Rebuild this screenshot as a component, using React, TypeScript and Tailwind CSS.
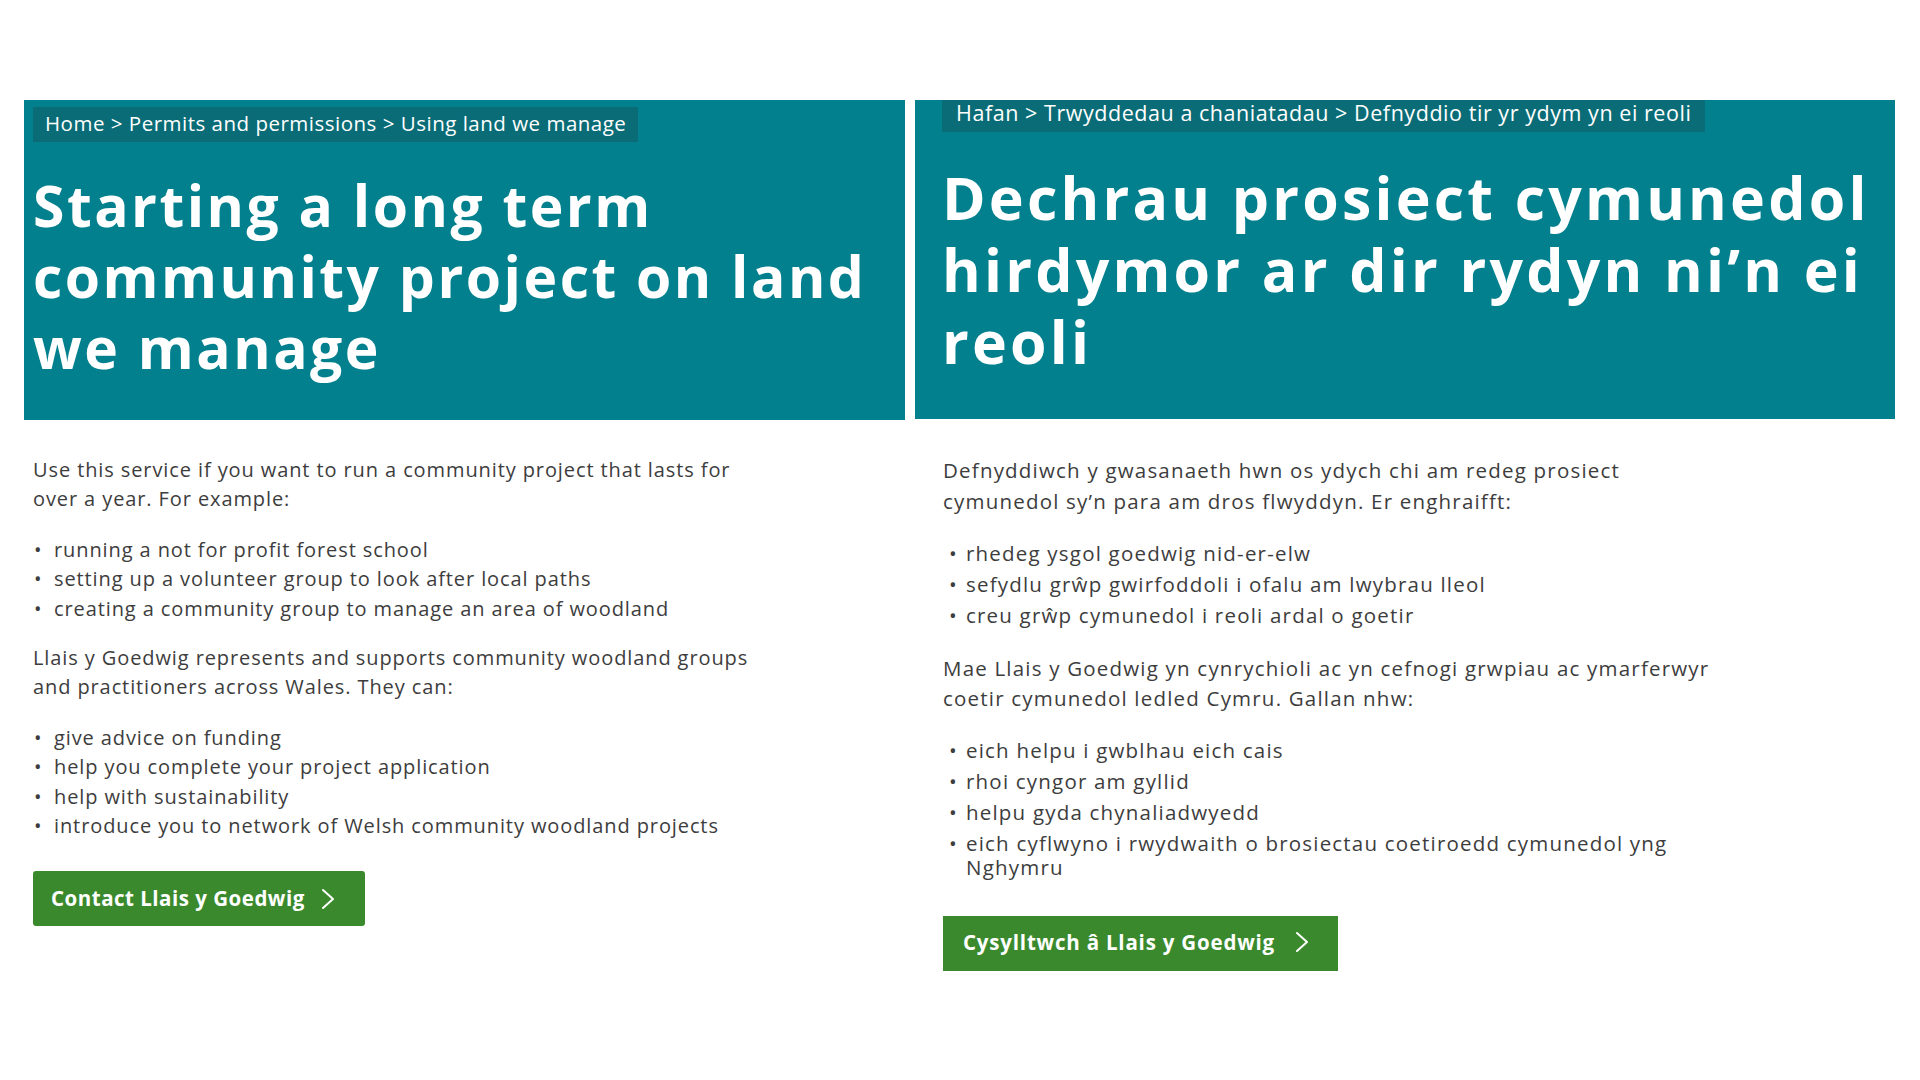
type Panel = {
  crumbs: string[];
  title: string[];
  intro: string[];
  first: string[];
  middle: string[];
  second: string[];
  button: string;
};

const english: Panel = {
  crumbs: ['Home', 'Permits and permissions', 'Using land we manage'],
  title: ['Starting a long term', 'community project on land', 'we manage'],
  intro: ['Use this service if you want to run a community project that lasts for', 'over a year. For example:'],
  first: [
    'running a not for profit forest school',
    'setting up a volunteer group to look after local paths',
    'creating a community group to manage an area of woodland',
  ],
  middle: ['Llais y Goedwig represents and supports community woodland groups', 'and practitioners across Wales. They can:'],
  second: [
    'give advice on funding',
    'help you complete your project application',
    'help with sustainability',
    'introduce you to network of Welsh community woodland projects',
  ],
  button: 'Contact Llais y Goedwig',
};

const welsh: Panel = {
  crumbs: ['Hafan', 'Trwyddedau a chaniatadau', 'Defnyddio tir yr ydym yn ei reoli'],
  title: ['Dechrau prosiect cymunedol', 'hirdymor ar dir rydyn ni’n ei', 'reoli'],
  intro: ['Defnyddiwch y gwasanaeth hwn os ydych chi am redeg prosiect', 'cymunedol sy’n para am dros flwyddyn. Er enghraifft:'],
  first: [
    'rhedeg ysgol goedwig nid-er-elw',
    'sefydlu grŵp gwirfoddoli i ofalu am lwybrau lleol',
    'creu grŵp cymunedol i reoli ardal o goetir',
  ],
  middle: ['Mae Llais y Goedwig yn cynrychioli ac yn cefnogi grwpiau ac ymarferwyr', 'coetir cymunedol ledled Cymru. Gallan nhw:'],
  second: [
    'eich helpu i gwblhau eich cais',
    'rhoi cyngor am gyllid',
    'helpu gyda chynaliadwyedd',
    'eich cyflwyno i rwydwaith o brosiectau coetiroedd cymunedol yng Nghymru',
  ],
  button: 'Cysylltwch â Llais y Goedwig',
};

const Lines = ({ lines }: { lines: string[] }) => (
  <>
    {lines.map((l, i) => (
      <span key={i} className="block whitespace-nowrap">
        {l}
      </span>
    ))}
  </>
);

const Chevron = () => (
  <svg width="14" height="22" viewBox="0 0 14 22" fill="none" stroke="currentColor" strokeWidth="2" strokeLinecap="round" strokeLinejoin="round">
    <polyline points="2,2 12,11 2,20" />
  </svg>
);

const Bullets = ({ items, tight }: { items: string[]; tight?: boolean }) => (
  <ul className={tight ? 'flex flex-col gap-[6.5px]' : 'flex flex-col'}>
    {items.map((t) => (
      <li key={t} className={tight ? 'flex leading-[24.5px]' : 'flex'}>
        <span className={tight ? 'w-[23px] shrink-0 pl-[6px]' : 'w-[21px] shrink-0 pl-[1px]'}>•</span>
        <span className={tight ? 'max-w-[760px]' : ''}>{t}</span>
      </li>
    ))}
  </ul>
);

const Left = () => (
  <div className="w-[881px] shrink-0">
    <div className="h-[320px] bg-[#03808e] px-[9px] pt-[7px]">
      <div className="inline-flex h-[35px] items-center bg-[#0a6c76] px-[12px] pb-[2px] text-[20.5px] tracking-[0.5px] text-white">
        {english.crumbs.join(' > ')}
      </div>
      <h1 className="mt-[28px] text-[57px] font-bold leading-[71px] tracking-[2.5px] text-white">
        <Lines lines={english.title} />
      </h1>
    </div>
    <div className="px-[9px] text-[20px] leading-[29.4px] tracking-[0.9px] text-[#3d3d3d]">
      <p className="mt-[35px]">
        <Lines lines={english.intro} />
      </p>
      <div className="mt-[21px]">
        <Bullets items={english.first} />
      </div>
      <p className="mt-[20px]">
        <Lines lines={english.middle} />
      </p>
      <div className="mt-[21px]">
        <Bullets items={english.second} />
      </div>
      <button className="mt-[31px] flex h-[55px] w-[332px] items-center gap-[16px] rounded-[3px] bg-[#3a8a2d] pl-[18px] text-[20.5px] font-bold tracking-[0.5px] text-white">
        {english.button}
        <Chevron />
      </button>
    </div>
  </div>
);

const Right = () => (
  <div className="w-[980px] shrink-0">
    <div className="h-[319px] bg-[#03808e] pl-[27px]">
      <div className="inline-flex h-[32px] items-center bg-[#0a6c76] px-[14px] pb-[5px] text-[21.5px] tracking-[0.55px] text-white">
        {welsh.crumbs.join(' > ')}
      </div>
      <h1 className="mt-[29px] text-[59px] font-bold leading-[72px] tracking-[3.2px] text-white">
        <Lines lines={welsh.title} />
      </h1>
    </div>
    <div className="px-[28px] text-[20.5px] leading-[30.6px] tracking-[1.2px] text-[#3d3d3d]">
      <p className="mt-[36px]">
        <Lines lines={welsh.intro} />
      </p>
      <div className="mt-[25px]">
        <Bullets items={welsh.first} tight />
      </div>
      <p className="mt-[25px]">
        <Lines lines={welsh.middle} />
      </p>
      <div className="mt-[24px]">
        <Bullets items={welsh.second} tight />
      </div>
      <button className="mt-[36px] flex h-[55px] w-[395px] items-center gap-[20px] bg-[#3a8a2d] pb-[2px] pl-[20px] text-[20.5px] font-bold tracking-[0.8px] text-white">
        {welsh.button}
        <Chevron />
      </button>
    </div>
  </div>
);

export default function App() {
  return (
    <div className="flex min-h-[1080px] w-[1920px] gap-[10px] bg-white pl-[24px] pt-[100px] font-['Open_Sans',sans-serif]">
      <Left />
      <Right />
    </div>
  );
}
